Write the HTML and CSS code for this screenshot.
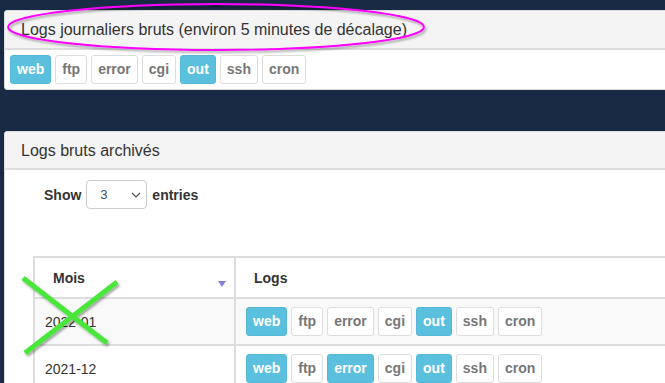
FILE: index.html
```html
<!DOCTYPE html>
<html>
	<head>
		<title>Logs</title>
		<link rel="stylesheet" href="styles.css">
	</head>
	<body>
		<div class="panel panel-live">
			<div class="panel-heading">Logs journaliers bruts (environ 5 minutes de décalage)</div>
			<div class="panel-body">
				<div class="btns">
					<span class="btn on">web</span>
					<span class="btn">ftp</span>
					<span class="btn">error</span>
					<span class="btn">cgi</span>
					<span class="btn on">out</span>
					<span class="btn">ssh</span>
					<span class="btn">cron</span>
				</div>
			</div>
		</div>

		<div class="panel panel-archive">
			<div class="panel-heading">Logs bruts archivés</div>
			<div class="panel-body">
				<div class="length">
					<b>Show</b>
					<span class="select">3
						<svg class="chevron" viewBox="0 0 10 6"><path d="M1 1l4 4 4-4" fill="none" stroke="#555" stroke-width="1.2"/></svg>
					</span>
					<b>entries</b>
				</div>

				<table class="logs">
					<thead>
						<tr>
							<th class="month">Mois <span class="sort"></span></th>
							<th>Logs</th>
						</tr>
					</thead>
					<tbody>
						<tr class="odd">
							<td>2022-01</td>
							<td>
								<div class="btns">
									<span class="btn on">web</span>
									<span class="btn">ftp</span>
									<span class="btn">error</span>
									<span class="btn">cgi</span>
									<span class="btn on">out</span>
									<span class="btn">ssh</span>
									<span class="btn">cron</span>
								</div>
							</td>
						</tr>
						<tr>
							<td>2021-12</td>
							<td>
								<div class="btns">
									<span class="btn on">web</span>
									<span class="btn">ftp</span>
									<span class="btn on">error</span>
									<span class="btn">cgi</span>
									<span class="btn on">out</span>
									<span class="btn">ssh</span>
									<span class="btn">cron</span>
								</div>
							</td>
						</tr>
					</tbody>
				</table>
			</div>
		</div>

		<!-- annotations drawn over the screenshot -->
		<svg class="marks" viewBox="0 0 665 383">
			<defs>
				<filter id="shade" x="-10%" y="-10%" width="120%" height="130%">
					<feDropShadow dx="1.5" dy="2" stdDeviation="1.2" flood-color="#000" flood-opacity="0.35"/>
				</filter>
			</defs>
			<ellipse cx="216" cy="27" rx="208" ry="23" fill="none" stroke="#f0f" stroke-width="2" filter="url(#shade)"/>
			<g stroke="#4ae63a" stroke-width="5" filter="url(#shade)">
				<line x1="23" y1="278" x2="107" y2="343"/>
				<line x1="25" y1="353" x2="117" y2="282"/>
			</g>
		</svg>
	</body>
</html>
```

FILE: styles.css
```css
* {
	margin: 0; padding: 0;
	box-sizing: border-box;
}

body {
	font-family: "Liberation Sans", Arial, sans-serif;
	font-size: 14px;
	color: #333;
	background: #182a44;
	overflow: hidden;
	height: 383px;
	padding: 10px 0 0 4px;
	position: relative;
}

.panel {
	width: 720px;
	background: #fff;
	border: 1px solid #ddd;
	border-radius: 3px;
}

.panel-archive {
	margin-top: 41px;
}

.panel-heading {
	background: #f4f4f4;
	border-bottom: 2px solid #ddd;
	font-size: 16px;
	padding: 0 16px;
	display: flex;
	align-items: center;
	height: 39px;
}

.panel-archive .panel-heading {
	height: 38px;
	padding-top: 1px;
}

.panel-body {
	padding: 5px 5px 5px;
}

.panel-archive .panel-body {
	padding: 10px 28px;
}

.btns {
	display: flex;
	gap: 4px;
}

.btn {
	display: inline-block;
	height: 29px;
	line-height: 27px;
	padding: 0 6px;
	border: 1px solid #ddd;
	border-radius: 3px;
	font-weight: bold;
	color: #777;
	background: #fff;
}

.btn.on {
	background: #5bc0de;
	border-color: #55b8d6;
	color: #fff;
}

.length {
	display: flex;
	align-items: center;
	gap: 5px;
	padding-left: 11px;
}

.select {
	display: flex;
	align-items: center;
	justify-content: space-between;
	width: 61px;
	height: 29px;
	border: 1px solid #ccc;
	border-radius: 4px;
	padding: 0 5px 0 13px;
	font-size: 13px;
	color: #3b4a6b;
}

.chevron {
	width: 10px; height: 6px;
}

.logs {
	margin-top: 47px;
	width: 680px;
	border-collapse: collapse;
	border: 2px solid #ddd;
}

.logs th, .logs td {
	border: 2px solid #ddd;
	text-align: left;
}

.logs th {
	height: 41px;
	padding: 0 18px;
	font-weight: bold;
}

.logs th.month {
	width: 201px;
	position: relative;
}

.sort {
	position: absolute;
	right: 8px; top: 23px;
	border-left: 4.5px solid transparent;
	border-right: 4.5px solid transparent;
	border-top: 6px solid #7f80e0;
}

.logs td {
	height: 47px;
	padding: 0 10px;
}

.logs tr.odd td {
	background: #f9f9f9;
}

.marks {
	position: absolute;
	top: 0; left: 0;
	width: 665px; height: 383px;
	pointer-events: none;
}
```
